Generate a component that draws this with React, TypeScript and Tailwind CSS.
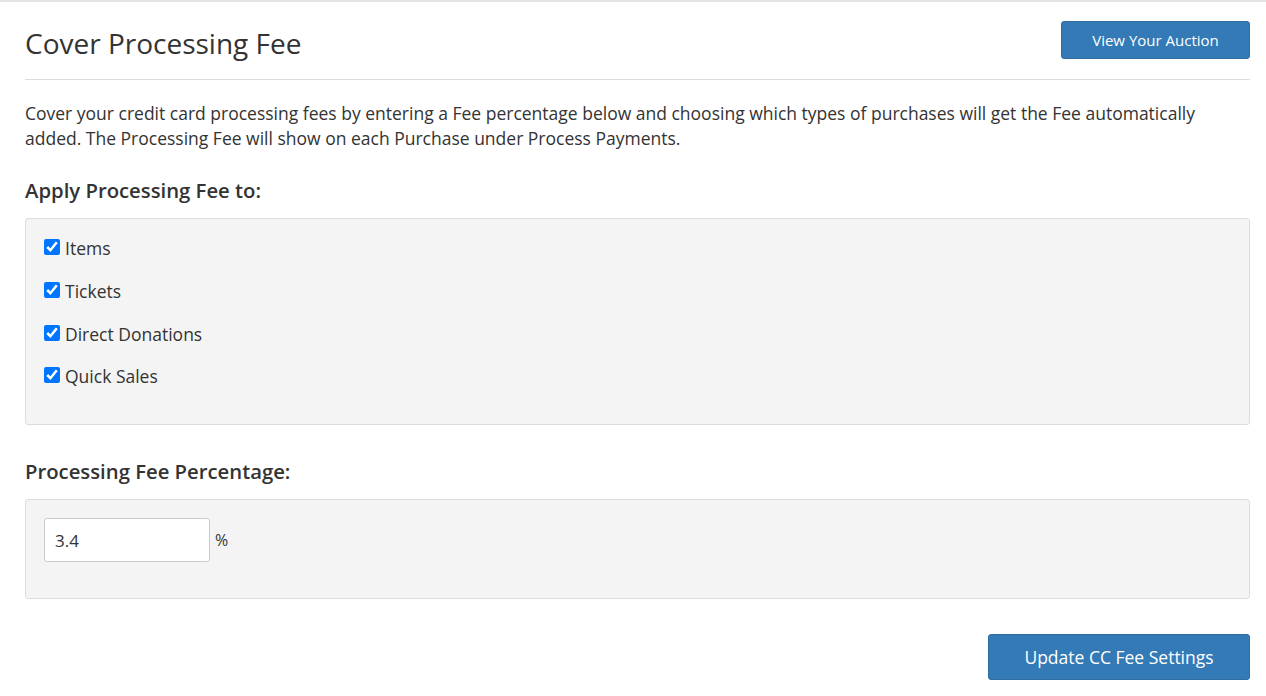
import { useState } from 'react';

const OPTIONS = ['Items', 'Tickets', 'Direct Donations', 'Quick Sales'];

function FeeCheckbox({ label }: { label: string }) {
	const [checked, setChecked] = useState(true);
	return (
		<label className="flex items-center h-[42.7px] text-[17.5px] text-[#333]">
			<input
				type="checkbox"
				checked={checked}
				onChange={() => setChecked(!checked)}
				className="size-[16px] mr-[5px] -mt-[2px] accent-[#0075ff]"
			/>
			{label}
		</label>
	);
}

export default function App() {
	return (
		<div
			className="w-[1266px] h-[696px] bg-white border-t-2 border-[#e5e5e5] text-[#333] overflow-hidden"
			style={{ fontFamily: '"Open Sans", sans-serif' }}
		>
			<div className="px-[25px] pr-[16px]">
				<div className="flex items-start justify-between pt-[19px] pb-[16px] border-b border-[#ddd]">
					<h1 className="text-[28px] leading-[40px] font-normal mt-[2px]">Cover Processing Fee</h1>
					<button className="h-[38px] w-[189px] bg-[#337ab7] border border-[#2e6da4] rounded-[3px] text-white text-[15px]">
						View Your Auction
					</button>
				</div>

				<p className="mt-[21px] text-[17.5px] leading-[25px] pr-[20px]">
					Cover your credit card processing fees by entering a Fee percentage below and choosing which types
					of purchases will get the Fee automatically added. The Processing Fee will show on each Purchase
					under Process Payments.
				</p>

				<h2 className="mt-[25px] text-[20.3px] leading-[28px] font-semibold">Apply Processing Fee to:</h2>
				<div className="mt-[14px] h-[207px] bg-[#f4f4f4] border border-[#ddd] rounded-[3px] px-[18px] pt-[8px]">
					{OPTIONS.map((o) => (
						<FeeCheckbox key={o} label={o} />
					))}
				</div>

				<h2 className="mt-[32px] text-[20.3px] leading-[28px] font-semibold">Processing Fee Percentage:</h2>
				<div className="mt-[14px] h-[100px] bg-[#f4f4f4] border border-[#ddd] rounded-[3px] px-[18px] pt-[18px]">
					<div className="flex items-center gap-[5px]">
						<input
							defaultValue="3.4"
							className="w-[166px] h-[44px] bg-white border border-[#ccc] rounded-[3px] px-[10px] text-[17px] text-[#333] outline-none"
						/>
						<span className="text-[16px]">%</span>
					</div>
				</div>

				<div className="flex justify-end mt-[35px]">
					<button className="h-[46px] w-[262px] bg-[#337ab7] border border-[#2e6da4] rounded-[3px] text-white text-[17.5px]">
						Update CC Fee Settings
					</button>
				</div>
			</div>
		</div>
	);
}
